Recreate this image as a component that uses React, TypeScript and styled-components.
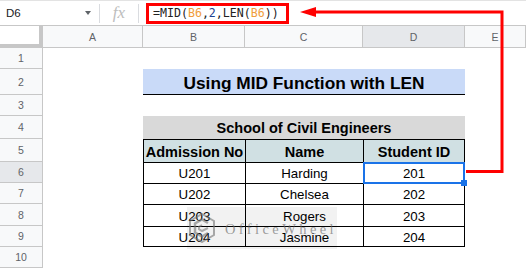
import React from 'react';
import styled, { createGlobalStyle, css } from 'styled-components';

const GlobalStyle = createGlobalStyle`
  html, body {
    margin: 0;
    padding: 0;
    background: #fff;
    overflow: hidden;
  }
  body {
    font-family: Arial, "Liberation Sans", sans-serif;
  }
`;

const Page = styled.div`
  position: relative;
  width: 526px;
  height: 269px;
  overflow: hidden;
  background: #fff;
`;

const FormulaBar = styled.div`
  display: flex;
  align-items: center;
  height: 26px;
  box-sizing: border-box;
  border-top: 1px solid #e3e3e3;
  border-bottom: 1px solid #c7c7c7;
`;

const NameBox = styled.div`
  display: flex;
  align-items: center;
  justify-content: space-between;
  width: 100px;
  height: 19px;
  box-sizing: border-box;
  padding: 0 8px 0 6px;
  border-right: 1px solid #dadce0;
  font-size: 11.5px;
  color: #202124;
`;

const Caret = styled.span`
  width: 0;
  height: 0;
  border-left: 3.5px solid transparent;
  border-right: 3.5px solid transparent;
  border-top: 4px solid #5f6368;
`;

const FxLabel = styled.div`
  display: flex;
  align-items: center;
  justify-content: center;
  width: 39px;
  height: 19px;
  box-sizing: border-box;
  border-right: 1px solid #dadce0;
  font-family: "Liberation Serif", serif;
  font-style: italic;
  font-size: 17px;
  color: #bdbdbd;
`;

const FormulaBox = styled.div`
  display: flex;
  align-items: center;
  margin-left: 7px;
  width: 143px;
  height: 21px;
  box-sizing: border-box;
  border: 3px solid #ff0000;
  padding-left: 4px;
  font-family: "DejaVu Sans Mono", "Liberation Mono", monospace;
  font-size: 11.6px;
  color: #222;
  white-space: pre;
`;

const Ref = styled.span`
  color: #f09d3c;
`;

const Num = styled.span`
  color: #1d3f8f;
`;

const Sheet = styled.div`
  display: grid;
  grid-template-columns: 43px 100px 102px 118px 102px 1fr;
  grid-template-rows: 22px 21px 26px 21px 23px 23px 21px 21px 22px 21px 21px;
`;

const Corner = styled.div`
  grid-column: 1;
  grid-row: 1;
  box-sizing: border-box;
  border-right: 4px solid #c7c7c7;
  border-bottom: 4px solid #c7c7c7;
  background: #fff;
`;

const ColHead = styled.div<{ $col: number; $active?: boolean }>`
  grid-column: ${(p) => p.$col};
  grid-row: 1;
  display: flex;
  align-items: center;
  justify-content: center;
  box-sizing: border-box;
  border-right: 1px solid #c7c7c7;
  border-bottom: 1px solid #c7c7c7;
  background: ${(p) => (p.$active ? '#e6e8eb' : '#f8f9fa')};
  font-size: 10.5px;
  color: #5f6368;
`;

const RowHead = styled.div<{ $row: number; $active?: boolean }>`
  grid-column: 1;
  grid-row: ${(p) => p.$row + 1};
  display: flex;
  align-items: center;
  justify-content: center;
  box-sizing: border-box;
  border-right: 1px solid #c7c7c7;
  border-bottom: 1px solid #c7c7c7;
  background: ${(p) => (p.$active ? '#e6e8eb' : '#f8f9fa')};
  font-size: 10.5px;
  color: #5f6368;
`;

const Banner = styled.div<{ $row: number; $bg: string; $size: number; $underline?: boolean }>`
  grid-column: 3 / span 3;
  grid-row: ${(p) => p.$row + 1};
  display: flex;
  align-items: center;
  justify-content: center;
  box-sizing: border-box;
  background: ${(p) => p.$bg};
  font-weight: bold;
  font-size: ${(p) => p.$size}px;
  color: #000;
  ${(p) =>
    p.$underline &&
    css`
      border-bottom: 1px solid #000;
      padding-top: 3px;
    `}
`;

const Cell = styled.div<{
  $row: number;
  $col: number;
  $head?: boolean;
  $last?: boolean;
  $bottom?: boolean;
  $selected?: boolean;
}>`
  grid-column: ${(p) => p.$col};
  grid-row: ${(p) => p.$row + 1};
  position: relative;
  display: flex;
  align-items: center;
  justify-content: center;
  box-sizing: border-box;
  border-top: 1px solid #000;
  border-left: 1px solid #000;
  border-right: ${(p) => (p.$last ? '1px solid #000' : 'none')};
  border-bottom: ${(p) => (p.$bottom ? '1px solid #000' : 'none')};
  background: ${(p) => (p.$head ? '#d0e0e3' : '#fff')};
  font-weight: ${(p) => (p.$head ? 'bold' : 'normal')};
  font-size: ${(p) => (p.$head ? '14.5px' : '13.3px')};
  padding-top: ${(p) => (p.$head ? '2px' : '1px')};
  color: #000;
  white-space: nowrap;
  ${(p) =>
    p.$selected &&
    css`
      &::after {
        content: '';
        position: absolute;
        top: -1px;
        left: -1px;
        right: -1px;
        bottom: -1px;
        border: 2px solid #1a73e8;
        z-index: 2;
      }
      &::before {
        content: '';
        position: absolute;
        right: -3px;
        bottom: -3px;
        width: 6px;
        height: 6px;
        background: #1a73e8;
        z-index: 3;
      }
    `}
`;

const ArrowLayer = styled.svg`
  position: absolute;
  left: 0;
  top: 0;
  width: 526px;
  height: 269px;
  pointer-events: none;
  z-index: 5;
`;

const Watermark = styled.div`
  position: absolute;
  left: 187px;
  top: 207px;
  width: 150px;
  height: 42px;
  display: flex;
  align-items: center;
  gap: 10px;
  padding-left: 2px;
  box-sizing: border-box;
  background: rgba(0, 0, 0, 0.05);
  z-index: 4;
`;

const WatermarkText = styled.span`
  font-family: "Liberation Serif", serif;
  font-size: 14.5px;
  letter-spacing: 3.4px;
  color: rgba(105, 105, 105, 0.65);
  padding-top: 3px;
`;

const columns = ['A', 'B', 'C', 'D', 'E'];

const rows = [
  ['U201', 'Harding', '201'],
  ['U202', 'Chelsea', '202'],
  ['U203', 'Rogers', '203'],
  ['U204', 'Jasmine', '204'],
];

const headers = ['Admission No', 'Name', 'Student ID'];

const App: React.FC = () => {
  return (
    <>
      <GlobalStyle />
      <Page>
        <FormulaBar>
          <NameBox>
            <span>D6</span>
            <Caret />
          </NameBox>
          <FxLabel>fx</FxLabel>
          <FormulaBox>
            =MID(<Ref>B6</Ref>,<Num>2</Num>,LEN(<Ref>B6</Ref>))
          </FormulaBox>
        </FormulaBar>

        <Sheet>
          <Corner />
          {columns.map((c, i) => (
            <ColHead key={c} $col={i + 2} $active={c === 'D'}>
              {c}
            </ColHead>
          ))}
          {Array.from({ length: 10 }, (_, i) => (
            <RowHead key={i} $row={i + 1} $active={i + 1 === 6}>
              {i + 1}
            </RowHead>
          ))}

          <Banner $row={2} $bg="#c9daf8" $size={17.3} $underline>
            Using MID Function with LEN
          </Banner>
          <Banner $row={4} $bg="#d9d9d9" $size={14.5}>
            School of Civil Engineers
          </Banner>

          {headers.map((h, i) => (
            <Cell key={h} $row={5} $col={i + 3} $head $last={i === 2}>
              {h}
            </Cell>
          ))}

          {rows.map((r, ri) =>
            r.map((v, ci) => (
              <Cell
                key={`${ri}-${ci}`}
                $row={6 + ri}
                $col={ci + 3}
                $last={ci === 2}
                $bottom={ri === rows.length - 1}
                $selected={ri === 0 && ci === 2}
              >
                {v}
              </Cell>
            ))
          )}
        </Sheet>

        <Watermark>
          <svg width="26" height="30" viewBox="0 0 26 30">
            <polygon
              points="13,1 25,8 25,22 13,29 1,22 1,8"
              fill="none"
              stroke="rgba(115,115,115,0.6)"
              strokeWidth="2"
            />
            <polyline
              points="19,10 13,6.5 6,10.5 6,19.5 13,23.5 19,20"
              fill="none"
              stroke="rgba(115,115,115,0.6)"
              strokeWidth="2.5"
            />
            <polyline
              points="13,12 10,13.8 10,16.2 13,18 19,15"
              fill="none"
              stroke="rgba(115,115,115,0.55)"
              strokeWidth="2"
            />
          </svg>
          <WatermarkText>OfficeWheel</WatermarkText>
        </Watermark>

        <ArrowLayer viewBox="0 0 526 269">
          <polyline
            points="466,171.5 502,171.5 502,12 312,12"
            fill="none"
            stroke="#ff0000"
            strokeWidth="3"
          />
          <polygon points="300,12 316,7 316,17" fill="#ff0000" />
        </ArrowLayer>
      </Page>
    </>
  );
};

export default App;
